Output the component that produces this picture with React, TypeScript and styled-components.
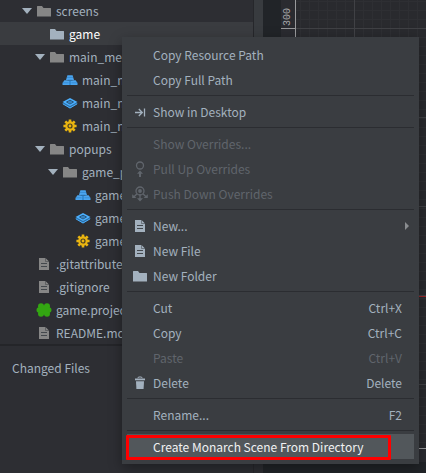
import React from "react";
import styled, { createGlobalStyle, css } from "styled-components";

const GlobalStyle = createGlobalStyle`
  *, *::before, *::after { box-sizing: border-box; }
  body {
    margin: 0;
    background: #212428;
    color: #a3b1be;
    font-family: "Noto Sans CJK SC", "Noto Sans", sans-serif;
    font-size: 12px;
    line-height: 23px;
  }
`;

type IconName =
  | "folder"
  | "collection"
  | "gui"
  | "script"
  | "file"
  | "project"
  | "show"
  | "pull"
  | "push"
  | "trash";

const Svg = styled.svg`
  display: block;
  width: 16px;
  height: 16px;
  flex: none;
  overflow: visible;
`;

const drawings: Record<IconName, React.ReactNode> = {
  folder: <path d="M1 3.5Q1 3 1.5 3H6L7.5 5H14.5Q15 5 15 5.5V13.5H1z" fill="currentColor" />,
  collection: (
    <g fill="#4aa5f0">
      <path d="M5.4 3.2h5.2L12 8H4z" />
      <path d="M2.4 8.2H7V13H.5V11z" />
      <path d="M9 8.2h4.6l1.9 2.8v2H9z" />
      <path d="M7 8h2v5H7z" fill="#338bd4" />
      <path d="M5 5.4h6M.8 10.8H6.6M9.4 10.8h5.8" stroke="#2f7cc0" strokeWidth=".6" />
      <path d="M5.5 8.3h5" stroke="#28649a" strokeWidth=".8" />
    </g>
  ),
  gui: (
    <g>
      <path d="M.5 8.5 8 4.5l7.5 4L8 13.5z" fill="#2d6fa6" />
      <path d="M.5 7 8 3l7.5 4L8 11z" fill="#4bb0ff" />
      <path d="M4.5 7 8 5.2 11.5 7 8 9z" fill="none" stroke="#234b6d" strokeWidth=".9" />
      <path d="M6.5 7h3" stroke="#234b6d" strokeWidth=".9" />
      <path d="M.8 8.8 8 13l7.2-4.2" fill="none" stroke="#4bb0ff" strokeWidth="1" />
    </g>
  ),
  script: (
    <g>
      <path
        d="M8 1.4V14.6M1.4 8H14.6M3.3 3.3 12.7 12.7M12.7 3.3 3.3 12.7"
        stroke="#eab511"
        strokeWidth="2.6"
      />
      <circle cx="8" cy="8" r="4.8" fill="#eab511" />
      <circle cx="8" cy="8" r="2" fill="#eab511" stroke="#4a4023" strokeWidth="1.2" />
    </g>
  ),
  file: (
    <g>
      <path d="M3 2h6.5L13 5.5V14H3z" fill="currentColor" />
      <path d="M9.5 2v3.5H13" fill="none" stroke="#3a3d41" strokeOpacity=".5" />
      <path d="M5 7.5h6M5 10.5h6" stroke="#43484d" strokeWidth="1" />
    </g>
  ),
  project: (
    <g fill="#33a612">
      <circle cx="5" cy="4.2" r="3" />
      <circle cx="11" cy="4.2" r="3" />
      <circle cx="3.2" cy="8" r="2.7" />
      <circle cx="12.8" cy="8" r="2.7" />
      <circle cx="5" cy="11.8" r="3" />
      <circle cx="11" cy="11.8" r="3" />
      <path d="M4 3.5h8v9H4z" />
    </g>
  ),
  show: (
    <path
      d="M3 8.5h7M6.8 5l3.5 3.5L6.8 12M12.5 4.5v8"
      fill="none"
      stroke="currentColor"
      strokeWidth="1.3"
    />
  ),
  pull: (
    <g>
      <circle cx="8" cy="4.5" r="3.5" fill="none" stroke="currentColor" strokeWidth="1.3" />
      <path d="M8 9.5l3 3.3H9V16H7v-3.2H5z" fill="currentColor" />
    </g>
  ),
  push: (
    <g fill="none" stroke="currentColor" strokeWidth="1.3">
      <circle cx="8" cy="5" r="4" />
      <circle cx="8" cy="5" r="1.9" fill="currentColor" stroke="none" />
      <path d="M8 8v5M4.8 8 2 10.8M11.2 8 14 10.8" />
      <path d="M8 15.5 5 12.2h6zM.2 8.2 4.4 12H.2zM15.8 8.2 11.6 12h4.2z" fill="currentColor" stroke="none" />
    </g>
  ),
  trash: (
    <g fill="currentColor">
      <path d="M3 3.5h10v1.8H3z" />
      <path d="M5.8 3.2 6.5 2h3l.7 1.2" fill="none" stroke="currentColor" />
      <path d="M4 6.2h8L11.6 14H4.4z" />
    </g>
  ),
};

const Icon = ({ name }: { name: IconName }) => (
  <Svg viewBox="0 0 16 16" aria-hidden="true">
    {drawings[name]}
  </Svg>
);

const Workspace = styled.div`
  position: relative;
  display: flex;
  height: 100vh;
  overflow: hidden;
`;

const Sidebar = styled.aside`
  flex: 0 0 254px;
  display: flex;
  flex-direction: column;
  background: #2d2e33;
  border-right: 1px solid #26272b;
  overflow: hidden;
`;

const Tree = styled.ul`
  list-style: none;
  margin: -1px 0 0;
  padding: 0;
  border-bottom: 2px solid #242529;
`;

const TreeRow = styled.li<{ $level: number; $selected?: boolean }>`
  display: flex;
  align-items: center;
  gap: 4px;
  height: 23px;
  padding-left: calc(20px + ${(p) => p.$level} * 13px);
  white-space: nowrap;
  color: #a3b1be;
  ${(p) =>
    p.$selected &&
    css`
      background: #3a3c40;
      color: #ffffff;
    `}
`;

const Toggle = styled.span<{ $shown?: boolean }>`
  display: flex;
  justify-content: flex-end;
  width: 12px;
  &::before {
    content: "";
    visibility: ${(p) => (p.$shown ? "visible" : "hidden")};
    border: 5px solid transparent;
    border-top: 6px solid #a3b1be;
    border-bottom: 0;
  }
`;

const TreeIcon = styled.span<{ $selected?: boolean }>`
  color: ${(p) => (p.$selected ? "#a3b1be" : "#868686")};
`;

const SectionTitle = styled.h2`
  margin: 0;
  padding: 10px 12px;
  font-size: 12px;
  font-weight: 400;
`;

const Splitter = styled.div`
  flex: 0 0 9px;
  background: linear-gradient(#383b3f 50%, #2d2e33 50%);
`;

const Editor = styled.main`
  flex: 1;
  display: grid;
  grid-template: 1fr 14px / 15px 1fr;
  padding: 0 0 11px 18px;
  background: #212428;
`;

const Canvas = styled.div`
  background:
    linear-gradient(#9b2528, #9b2528) 0 296px / 100% 1px no-repeat,
    repeating-linear-gradient(#404145 0 1px, transparent 1px 89px) 0 28px / 100% 89px,
    repeating-linear-gradient(90deg, #404145 0 1px, transparent 1px 89px) 58px 0 / 89px 100%,
    repeating-linear-gradient(#2e2f33 0 1px, transparent 1px 9px) 0 1px / 100% 9px,
    repeating-linear-gradient(90deg, #2e2f33 0 1px, transparent 1px 9px) 4px 0 / 9px 100%,
    #292a2e;
`;

const VerticalRuler = styled.div`
  background: #2a2b30;
  border-right: 1px solid #98999b;
`;

const HorizontalRuler = styled.div`
  grid-column: 1 / -1;
  background: #2a2b30;
  border-top: 1px solid #98999b;
`;

const Tick = styled.div`
  display: flex;
  justify-content: center;
  height: 29px;
  padding-bottom: 2px;
  border-bottom: 1px solid #98999b;
  color: #a5a6a8;
  font: 10px/12px "Liberation Mono", monospace;
  span {
    writing-mode: vertical-rl;
    transform: rotate(180deg);
  }
`;

const Menu = styled.div`
  position: absolute;
  left: 122px;
  top: 37px;
  min-width: 297px;
  padding: 5px;
  background: #3a3d41;
  box-shadow: 0 4px 12px rgba(0, 0, 0, 0.35);
`;

const MenuItem = styled.button<{ $active?: boolean }>`
  position: relative;
  display: grid;
  grid-template-columns: 16px 1fr auto;
  align-items: center;
  gap: 5px;
  width: 100%;
  height: 25px;
  margin: 0;
  padding: 0 12px 0 5px;
  border: 0;
  background: ${(p) => (p.$active ? "#52575b" : "transparent")};
  color: ${(p) => (p.$active ? "#f0f1f2" : "#a3b1be")};
  font: inherit;
  line-height: 18px;
  text-align: left;
  white-space: nowrap;
  &:disabled {
    color: #60656c;
  }
`;

const Label = styled.span`
  grid-column: 2;
`;

const Shortcut = styled.span`
  grid-column: 3;
`;

const SubmenuArrow = styled.span`
  position: absolute;
  right: 5px;
  border: 4px solid transparent;
  border-left-color: #8a8d90;
  border-right: 0;
`;

const Separator = styled.hr`
  height: 1px;
  margin: 3px 0;
  border: 0;
  background: #2b2d31;
`;

const Highlight = styled.span`
  position: absolute;
  inset: 1px 23px -1px -1px;
  border: 3px solid #ff0000;
  border-radius: 1px;
  pointer-events: none;
`;

interface Node {
  level: number;
  name: string;
  icon: IconName;
  open?: boolean;
  selected?: boolean;
}

const nodes: Node[] = [
  { level: 0, name: "screens", icon: "folder", open: true },
  { level: 1, name: "game", icon: "folder", selected: true },
  { level: 1, name: "main_menu", icon: "folder", open: true },
  { level: 2, name: "main_menu.collection", icon: "collection" },
  { level: 2, name: "main_menu.gui", icon: "gui" },
  { level: 2, name: "main_menu.gui_script", icon: "script" },
  { level: 1, name: "popups", icon: "folder", open: true },
  { level: 2, name: "game_popup", icon: "folder", open: true },
  { level: 3, name: "game_popup.collection", icon: "collection" },
  { level: 3, name: "game_popup.gui", icon: "gui" },
  { level: 3, name: "game_popup.gui_script", icon: "script" },
  { level: 0, name: ".gitattributes", icon: "file" },
  { level: 0, name: ".gitignore", icon: "file" },
  { level: 0, name: "game.project", icon: "project" },
  { level: 0, name: "README.md", icon: "file" },
];

interface Command {
  label: string;
  icon?: IconName;
  shortcut?: string;
  disabled?: boolean;
  submenu?: boolean;
  active?: boolean;
}

const groups: Command[][] = [
  [{ label: "Copy Resource Path" }, { label: "Copy Full Path" }],
  [{ label: "Show in Desktop", icon: "show" }],
  [
    { label: "Show Overrides...", disabled: true },
    { label: "Pull Up Overrides", icon: "pull", disabled: true },
    { label: "Push Down Overrides", icon: "push", disabled: true },
  ],
  [
    { label: "New...", icon: "file", submenu: true },
    { label: "New File", icon: "file" },
    { label: "New Folder", icon: "folder" },
  ],
  [
    { label: "Cut", shortcut: "Ctrl+X" },
    { label: "Copy", shortcut: "Ctrl+C" },
    { label: "Paste", shortcut: "Ctrl+V", disabled: true },
    { label: "Delete", icon: "trash", shortcut: "Delete" },
  ],
  [{ label: "Rename...", shortcut: "F2" }],
  [{ label: "Create Monarch Scene From Directory", active: true }],
];

export default function App() {
  return (
    <Workspace>
      <GlobalStyle />
      <Sidebar>
        <Tree>
          {nodes.map((n) => (
            <TreeRow key={n.name} $level={n.level} $selected={n.selected}>
              <Toggle $shown={n.open} />
              <TreeIcon $selected={n.selected}>
                <Icon name={n.icon} />
              </TreeIcon>
              {n.name}
            </TreeRow>
          ))}
        </Tree>
        <SectionTitle>Changed Files</SectionTitle>
      </Sidebar>
      <Splitter />
      <Editor>
        <VerticalRuler>
          <Tick>
            <span>300</span>
          </Tick>
        </VerticalRuler>
        <Canvas />
        <HorizontalRuler />
      </Editor>
      <Menu role="menu">
        {groups.map((group, i) => (
          <React.Fragment key={group[0].label}>
            {i > 0 && <Separator />}
            {group.map((c) => (
              <MenuItem key={c.label} type="button" role="menuitem" disabled={c.disabled} $active={c.active}>
                {c.icon && <Icon name={c.icon} />}
                <Label>{c.label}</Label>
                {c.shortcut && <Shortcut>{c.shortcut}</Shortcut>}
                {c.submenu && <SubmenuArrow />}
                {c.active && <Highlight />}
              </MenuItem>
            ))}
          </React.Fragment>
        ))}
      </Menu>
    </Workspace>
  );
}
